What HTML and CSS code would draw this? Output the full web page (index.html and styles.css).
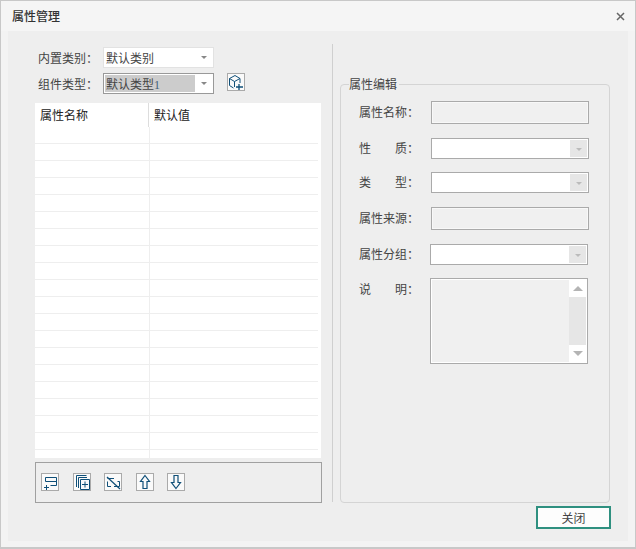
FILE: index.html
```html
<!DOCTYPE html>
<html lang="zh">
<head>
<meta charset="utf-8">
<title>属性管理</title>
<link rel="stylesheet" href="styles.css">
</head>
<body>
<div class="window">
  <header class="titlebar">
    <span class="title">属性管理</span>
    <svg class="close" width="9" height="9" viewBox="0 0 9 9"><path d="M1 1l7 7M8 1l-7 7" stroke="#666" stroke-width="1.5" fill="none"/></svg>
  </header>
  <div class="content">
    <section class="left">
      <div class="pick-row">
        <span class="pick-label">内置类别：</span>
        <div class="combo"><span>默认类别</span><i class="caret"></i></div>
      </div>
      <div class="pick-row second">
        <span class="pick-label">组件类型：</span>
        <div class="combo focused"><span class="selected">默认类型<small>1</small></span><i class="caret"></i></div>
        <button class="icon-btn add-type" type="button">
          <svg width="16" height="16" viewBox="0 0 16 16" fill="none" stroke="#0f4f78"><path d="M1.5 4.5L7 1.5L12 4.5V9M1.5 4.5V11.5L5.5 14M1.5 4.5L6.5 7.5V13M6.5 7.5L12 4.5"/><path d="M11 10V16M8 13H15" stroke-width="1.3"/></svg>
        </button>
      </div>
      <div class="grid">
        <div class="grid-head"><div class="head-cell first">属性名称</div><div class="head-cell">默认值</div></div>
        <div class="row"><div class="cell"></div></div>
        <div class="row"><div class="cell"></div></div>
        <div class="row"><div class="cell"></div></div>
        <div class="row"><div class="cell"></div></div>
        <div class="row"><div class="cell"></div></div>
        <div class="row"><div class="cell"></div></div>
        <div class="row"><div class="cell"></div></div>
        <div class="row"><div class="cell"></div></div>
        <div class="row"><div class="cell"></div></div>
        <div class="row"><div class="cell"></div></div>
        <div class="row"><div class="cell"></div></div>
        <div class="row"><div class="cell"></div></div>
        <div class="row"><div class="cell"></div></div>
        <div class="row"><div class="cell"></div></div>
        <div class="row"><div class="cell"></div></div>
        <div class="row"><div class="cell"></div></div>
        <div class="row"><div class="cell"></div></div>
        <div class="row"><div class="cell"></div></div>
        <div class="row"><div class="cell"></div></div>
        <div class="row tail"><div class="cell"></div></div>
      </div>
      <div class="toolbar">
        <button class="icon-btn" type="button"><svg width="16" height="16" viewBox="0 0 16 16" fill="none" stroke="#0f4f78"><path d="M14.5 7.5H3.5V3.5H14.5V11.5H8.5"/><path d="M4.5 11V16M2 13.5H7"/></svg></button>
        <button class="icon-btn wide" type="button"><svg width="16" height="16" viewBox="0 0 16 16" fill="none" stroke="#0f4f78"><path d="M2.5 13V1.5H12.5"/><path d="M4.5 14V3.5H13"/><path d="M6.5 5.5H15.5V15.5H6.5Z"/><path d="M11 7.5V13.5M8 10.5H14"/></svg></button>
        <button class="icon-btn" type="button"><svg width="16" height="16" viewBox="0 0 16 16" fill="none" stroke="#0f4f78"><path d="M2.5 4.5H9M14.5 7.5V12.5H9M6 12.5H2.5V7.5"/><path d="M14.5 7.5H12.5"/><path d="M2 3L15 15" stroke-width="1.2"/></svg></button>
        <button class="icon-btn wide" type="button"><svg width="16" height="16" viewBox="0 0 16 16" fill="none" stroke="#0f4f78" stroke-width="1.2"><path d="M8 1.5L12.5 7.5H10V14.5H6V7.5H3.5Z"/></svg></button>
        <button class="icon-btn" type="button"><svg width="16" height="16" viewBox="0 0 16 16" fill="none" stroke="#0f4f78" stroke-width="1.2"><path d="M8 14.5L12.5 8.5H10V1.5H6V8.5H3.5Z"/></svg></button>
      </div>
    </section>
    <div class="divider"></div>
    <section class="right">
      <fieldset class="editor">
        <legend>属性编辑</legend>
        <div class="form">
          <div class="form-row"><span class="form-label">属性名称：</span><div class="field input"></div></div>
          <div class="form-row"><span class="form-label spaced"><span>性</span><span>质：</span></span><div class="field drop"><b class="drop-btn"><i class="caret dim"></i></b></div></div>
          <div class="form-row"><span class="form-label spaced"><span>类</span><span>型：</span></span><div class="field drop"><b class="drop-btn"><i class="caret dim"></i></b></div></div>
          <div class="form-row"><span class="form-label">属性来源：</span><div class="field input"></div></div>
          <div class="form-row shift"><span class="form-label">属性分组：</span><div class="field drop"><b class="drop-btn"><i class="caret dim"></i></b></div></div>
          <div class="form-row shift top"><span class="form-label spaced"><span>说</span><span>明：</span></span>
            <div class="field memo">
              <div class="scroll">
                <span class="arrow"><i class="tri up"></i></span>
                <span class="track"></span>
                <span class="arrow"><i class="tri down"></i></span>
              </div>
            </div>
          </div>
        </div>
      </fieldset>
      <div class="actions"><button class="close-btn" type="button">关闭</button></div>
    </section>
  </div>
</div>
</body>
</html>
```

FILE: styles.css
```css
* { box-sizing: border-box; }
html, body { margin: 0; padding: 0; }
body {
  width: 636px;
  height: 549px;
  font-family: "Noto Sans CJK SC", "Liberation Sans", sans-serif;
  font-size: 12px;
  color: #444;
  background: #f3f3f3;
}
.window {
  width: 636px;
  height: 549px;
  display: flex;
  flex-direction: column;
  border: 1px solid #c8c8c8;
  border-bottom-width: 2px;
  background: #f3f3f3;
}
.titlebar {
  height: 30px;
  flex: none;
  display: flex;
  align-items: center;
  justify-content: space-between;
  padding: 0 10px 0 11px;
  background: #f5f5f5;
}
.title { font-size: 12px; font-weight: 500; color: #333; line-height: 16px; }
.close { display: block; margin-top: 1px; }
.content {
  flex: 1;
  display: flex;
  margin: 0 7px 6px;
  background: #eeeeee;
}
.left {
  width: 324px;
  flex: none;
  padding: 16px 0 0 27px;
}
.pick-row { display: flex; align-items: center; height: 21px; }
.pick-row.second { margin-top: 5px; }
.pick-label { width: 68px; padding-left: 3px; flex: none; line-height: 16px; white-space: nowrap; }
.combo {
  width: 111px;
  height: 21px;
  flex: none;
  display: flex;
  align-items: center;
  padding-left: 2px;
  background: #fff;
  border: 1px solid #e2e2e2;
  position: relative;
  line-height: 16px;
}
.combo.focused { border-color: #999; padding-left: 1px; }
.selected {
  width: 90px;
  height: 17px;
  line-height: 17px;
  padding-left: 1px;
  background: #cccccc;
}
.selected small { font-size: 12px; color: #3f5f78; font-family: "Liberation Serif", serif; }
.caret {
  position: absolute;
  right: 6px;
  top: 8px;
  width: 0;
  height: 0;
  border-left: 3px solid transparent;
  border-right: 3px solid transparent;
  border-top: 3px solid #888;
}
.caret.dim { border-top-color: #bbb; right: 5px; top: 8px; }
.icon-btn {
  width: 18px;
  height: 18px;
  flex: none;
  padding: 0;
  display: block;
  border: 1px solid #aaa;
  background: #fafafa;
}
.icon-btn svg { display: block; }
.add-type { margin: -3px 0 0 13px; }
.grid {
  width: 286px;
  height: 355px;
  margin-top: 9px;
  padding-right: 3px;
  background: #fff;
  overflow: hidden;
}
.grid-head { display: flex; height: 24px; color: #222; }
.head-cell { flex: 1; padding-left: 5px; line-height: 24px; font-size: 12px; }
.head-cell.first { flex: none; width: 114px; border-right: 1px solid #ddd; }
.row { height: 17px; border-bottom: 1px solid #eeeeee; }
.row.tail { height: 8px; border-bottom: 0; }
.cell { width: 115px; height: 100%; border-right: 1px solid #eeeeee; }
.toolbar {
  width: 287px;
  height: 41px;
  margin-top: 4px;
  display: flex;
  align-items: flex-start;
  gap: 13px;
  padding: 10px 0 0 5px;
  border: 1px solid #a0a0a0;
}
.toolbar .wide { margin-left: 1px; }
.divider {
  width: 1px;
  height: 458px;
  margin-top: 13px;
  flex: none;
  background: #cfcfcf;
}
.right {
  width: 271px;
  margin-left: 7px;
  flex: none;
  display: flex;
  flex-direction: column;
}
.editor {
  width: 270px;
  height: 427px;
  margin: 45px 0 0;
  padding: 0;
  border: 1px solid #d4d4d4;
  border-radius: 4px;
}
.editor legend {
  margin-left: 8px;
  padding: 0 2px 0 0;
  line-height: 16px;
  height: 16px;
  color: #444;
}
.form {
  display: flex;
  flex-direction: column;
  padding-top: 9px;
}
.form-row { display: flex; align-items: center; margin-bottom: 13px; }
.form-row:nth-child(1), .form-row:nth-child(3), .form-row:nth-child(4) { margin-bottom: 14px; }
.form-label {
  width: 90px;
  padding-left: 18px;
  padding-bottom: 2px;
  flex: none;
  line-height: 16px;
  white-space: nowrap;
}
.form-label.spaced { display: flex; gap: 24px; }
.field {
  width: 158px;
  flex: none;
  position: relative;
  border: 1px solid #aaa;
}
.input { height: 23px; background: #f0f0f0; box-shadow: inset 0 0 0 1px #f8f8f8; }
.drop { height: 21px; background: #fff; }
.drop-btn {
  position: absolute;
  right: 1px;
  top: 1px;
  bottom: 1px;
  width: 17px;
  background: #e6e6e6;
}
.shift .field { margin-left: -1px; }
.top { align-items: flex-start; }
.top .form-label { padding-top: 3px; }
.memo {
  height: 86px;
  background: #f0f0f0;
  border-color: #aaa;
  box-shadow: inset 0 0 0 1px #fff;
}
.scroll {
  position: absolute;
  right: 1px;
  top: 1px;
  bottom: 1px;
  width: 17px;
  display: flex;
  flex-direction: column;
  background: #fff;
}
.arrow { height: 17px; flex: none; display: flex; align-items: center; justify-content: center; }
.track { flex: 1; background: #e6e6e6; }
.tri { width: 0; height: 0; border-left: 5px solid transparent; border-right: 5px solid transparent; }
.tri.up { border-bottom: 5px solid #b4b4b4; }
.tri.down { border-top: 5px solid #b4b4b4; }
.actions { display: flex; justify-content: flex-end; margin-top: 3px; padding-right: 0; }
.close-btn {
  width: 75px;
  height: 23px;
  padding: 0;
  font: inherit;
  font-size: 12px;
  line-height: 18px;
  color: #444;
  background: #fdfdfd;
  border: 2px solid #2f9080;
}
```
